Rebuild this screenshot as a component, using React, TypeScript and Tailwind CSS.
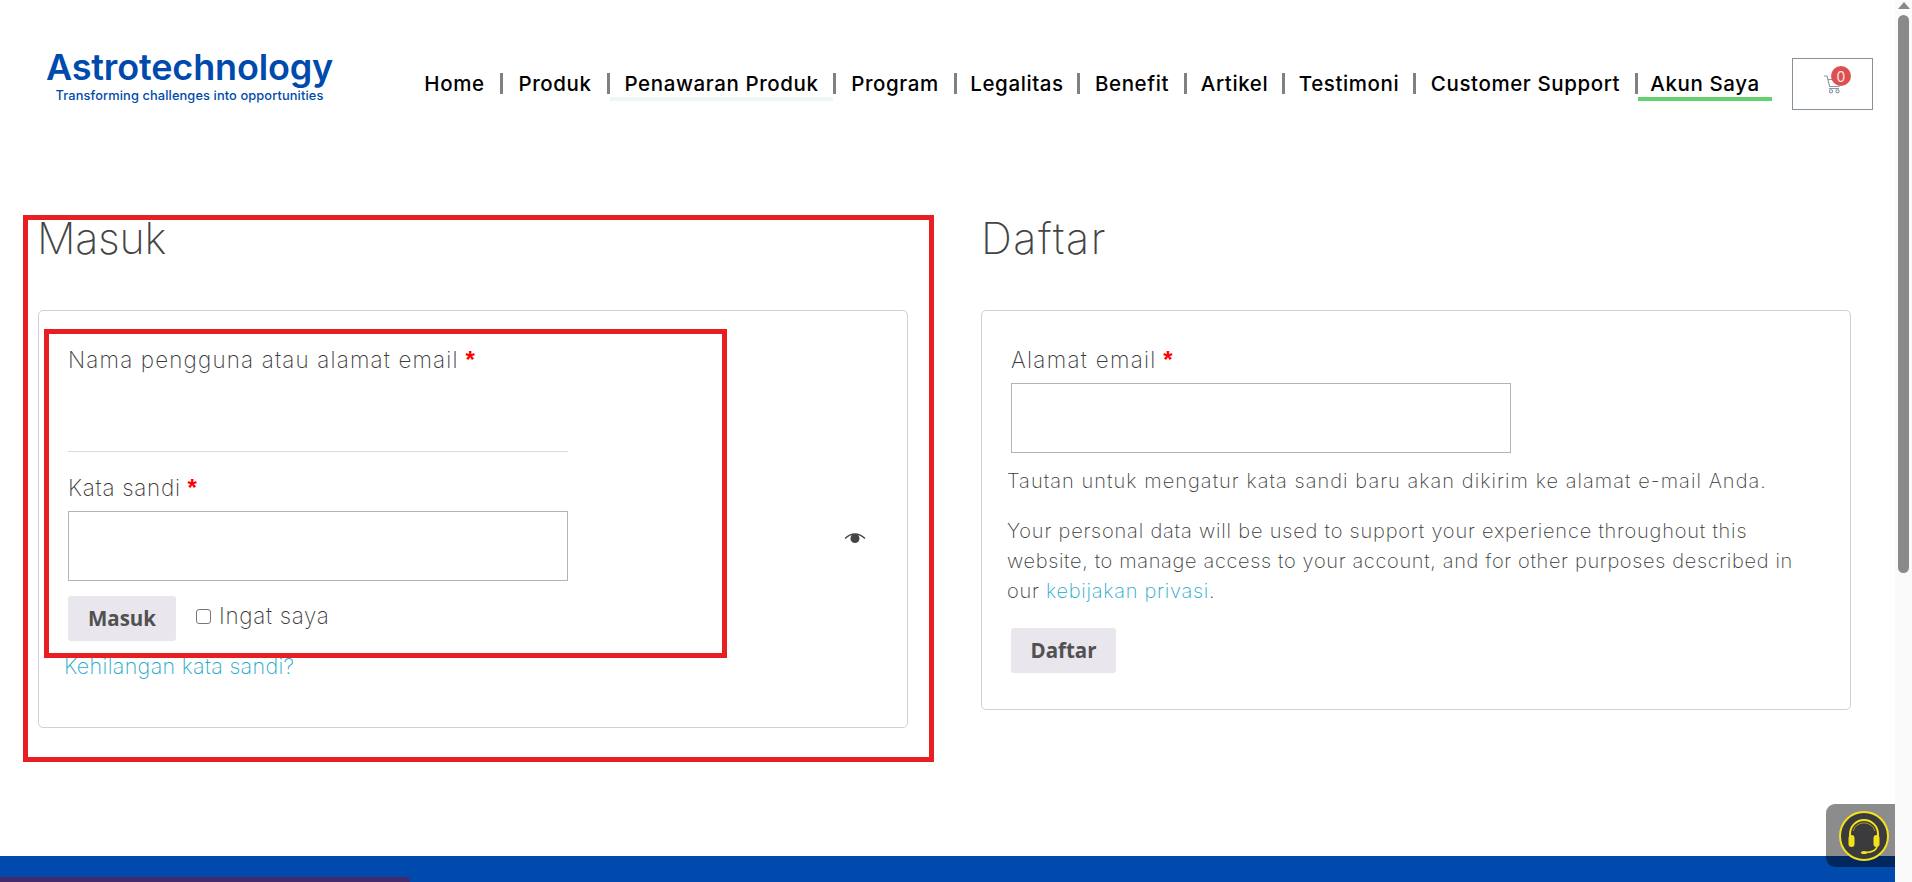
const navItems = [
  { label: "Home", w: "w-[91px]" },
  { label: "Produk", w: "w-[104px]" },
  { label: "Penawaran Produk", w: "w-[223px]", line: "border-[#edf8f1]" },
  { label: "Program", w: "w-[118px]" },
  { label: "Legalitas", w: "w-[120px]" },
  { label: "Benefit", w: "w-[104px]" },
  { label: "Artikel", w: "w-[95px]" },
  { label: "Testimoni", w: "w-[128px]" },
  { label: "Customer Support", w: "w-[219px]" },
  { label: "Akun Saya", w: "w-[134px]", line: "border-[#64d070]" },
];

function Req() {
  return <span className="font-['Liberation_Sans',sans-serif] text-[24px] font-bold leading-[20px] tracking-normal text-[#ff0000]"> *</span>;
}

function CartIcon() {
  return (
    <svg width="20" height="20" viewBox="0 0 20 20" fill="none" stroke="#8d96a0" strokeWidth="1.1">
      <path d="M1 2h3l2.6 10.5h9.4l2-7H5" />
      <path d="M6 14.5h10" />
      <circle cx="8" cy="17.3" r="1.6" />
      <circle cx="14.5" cy="17.3" r="1.6" />
    </svg>
  );
}

function EyeIcon() {
  return (
    <svg width="22" height="11" viewBox="0 0 22 11" fill="none">
      <path d="M1 5.5C4.5 2 7.5 1 11 1s6.500 1 10 4.500" stroke="#444" strokeWidth="1.300" />
      <circle cx="11" cy="5.500" r="4.500" fill="#444" />
    </svg>
  );
}

function HeadsetIcon() {
  return (
    <svg width="50" height="50" viewBox="0 0 50 50">
      <circle cx="25" cy="25" r="24" fill="#3b3a3c" stroke="#f2e21c" strokeWidth="2" />
      <path d="M11 27v-4a14 14 0 0 1 28 0v4" fill="none" stroke="#f2e21c" strokeWidth="2" />
      <path d="M14 20a11.500 11.500 0 0 1 22 0" fill="none" stroke="#f2e21c" strokeWidth="1" opacity="0.6" />
      <rect x="9.500" y="24" width="6" height="12" rx="3" fill="#f2e21c" />
      <rect x="34.500" y="24" width="6" height="12" rx="3" fill="#f2e21c" />
      <path d="M38 35c0 4-5 6.500-12 6.500" fill="none" stroke="#f2e21c" strokeWidth="1.500" />
      <ellipse cx="25" cy="41.500" rx="3" ry="1.600" fill="#f2e21c" />
    </svg>
  );
}

export default function App() {
  return (
    <div className="relative flex h-[882px] w-[1912px] overflow-hidden bg-white font-['Inter',sans-serif] font-extralight text-[#3c3c3c]">
      <div className="flex w-[1895px] flex-col">
        <header className="flex h-[157px] items-start">
          <div className="ml-[46px] mt-[47px] flex w-[287px] flex-col items-center text-[#004aad]">
            <div className="text-[36px] font-semibold leading-[40px] tracking-[-0.15px]">Astrotechnology</div>
            <div className="text-[12.800px] font-medium leading-[17px] tracking-[0.12px]">Transforming challenges into opportunities</div>
          </div>
          <nav className="ml-[76px] mt-[69px] flex items-start text-[20.500px] font-medium tracking-[0.6px] text-black">
            {navItems.map((item, i) => (
              <div key={item.label} className="flex items-start">
                <a className={`block h-[32px] border-b-[4px] text-center leading-[29px] ${item.w} ${item.line ?? "border-transparent"}`}>
                  {item.label}
                </a>
                {i < navItems.length - 1 && <div className="mt-[4px] h-[21px] w-[3px] bg-[#808080]" />}
              </div>
            ))}
          </nav>
          <div className="relative ml-[20px] mt-[58px] flex h-[52px] w-[81px] items-center justify-center border border-[#87919b]">
            <CartIcon />
            <span className="absolute left-[38px] top-[7px] flex h-[20px] w-[20px] items-center justify-center rounded-full bg-[#dd5050] text-[14px] font-normal text-[#fbe3e3]">0</span>
          </div>
        </header>

        <main className="ml-[38px] grid w-[1813px] grid-cols-[870px_870px] gap-x-[73px]">
          <section>
            <h2 className="-ml-px h-[153px] pt-[55px] text-[43px] font-extralight leading-[52px] tracking-[-0.3px] text-[#444]">Masuk</h2>
            <div className="relative h-[418px] rounded-[5px] border border-[#cfcfdd] pl-[29px] pr-[29px] pt-[35px]">
              <label className="block text-[22.400px] leading-[28px] tracking-[1.17px]">Nama pengguna atau alamat email<Req /></label>
              <div className="mt-[77px] h-px w-[500px] bg-[#dcdce0]" />
              <label className="mt-[22px] block text-[22.400px] leading-[28px] tracking-[0.75px]">Kata sandi<Req /></label>
              <div className="mt-[9px] h-[70px] w-[500px] border border-[#b4b4b4]" />
              <div className="mt-[15px] flex items-start">
                <button className="h-[45px] w-[108px] rounded-[3px] bg-[#e9e6ed] font-['Open_Sans',sans-serif] text-[20.500px] font-bold text-[#515151]">Masuk</button>
                <span className="ml-[20px] mt-[13px] h-[15px] w-[15px] rounded-[3px] border border-[#767676]" />
                <span className="ml-[8px] mt-[6px] text-[22.400px] leading-[28px] tracking-[0.7px]">Ingat saya</span>
              </div>
              <a className="-ml-[4px] mt-[11px] block text-[21.500px] leading-[28px] tracking-[0.32px] text-[#1fa9cc]">Kehilangan kata sandi?</a>
              <span className="absolute left-[805px] top-[222px] flex"><EyeIcon /></span>
            </div>
          </section>
          <section>
            <h2 className="h-[153px] pt-[55px] text-[43px] font-extralight leading-[52px] tracking-[1.5px] text-[#444]">Daftar</h2>
            <div className="h-[400px] rounded-[5px] border border-[#cfcfdd] px-[25px] pt-[35px]">
              <label className="ml-[4px] block text-[22.400px] leading-[28px] tracking-[1.3px]">Alamat email<Req /></label>
              <div className="ml-[4px] mt-[9px] h-[70px] w-[500px] border border-[#b4b4b4]" />
              <p className="mt-[13px] whitespace-nowrap text-[20px] leading-[30px] tracking-[1.05px]">Tautan untuk mengatur kata sandi baru akan dikirim ke alamat e-mail Anda.</p>
              <p className="mt-[20px] whitespace-nowrap text-[20px] leading-[30px]">
                <span className="block tracking-[0.81px]">Your personal data will be used to support your experience throughout this</span>
                <span className="block tracking-[0.66px]">website, to manage access to your account, and for other purposes described in</span>
                <span className="block tracking-[0.75px]">our <a className="text-[#1fa9cc]">kebijakan privasi</a>.</span>
              </p>
              <button className="ml-[4px] mt-[22px] h-[45px] w-[105px] rounded-[3px] bg-[#e9e6ed] font-['Open_Sans',sans-serif] text-[20.500px] font-bold text-[#515151]">Daftar</button>
            </div>
          </section>
        </main>

        <footer className="mt-auto h-[26px] bg-[#004aad] pt-[21px]">
          <div className="h-[5px] w-[410px] rounded-tr-[4px] bg-[#432a6b]" />
        </footer>
      </div>

      <div className="flex h-full w-[17px] flex-col items-center bg-[#fafafa]">
        <div className="mt-[2px] h-0 w-0 border-x-[6px] border-b-[7px] border-x-transparent border-b-[#8a8a8a]" />
        <div className="mt-[6px] h-[558px] w-[11px] rounded-[6px] bg-[#8a8a8a]" />
      </div>

      <div className="absolute left-[1826px] top-[804px] flex h-[63px] w-[69px] items-center justify-end rounded-l-[9px] bg-black/45 pr-[6px]">
        <HeadsetIcon />
      </div>

      <div className="pointer-events-none absolute left-[23px] top-[215px] h-[547px] w-[911px] border-[5px] border-[#e91e23]" />
      <div className="pointer-events-none absolute left-[44px] top-[329px] h-[329px] w-[683px] border-[5px] border-[#e91e23]" />
    </div>
  );
}
